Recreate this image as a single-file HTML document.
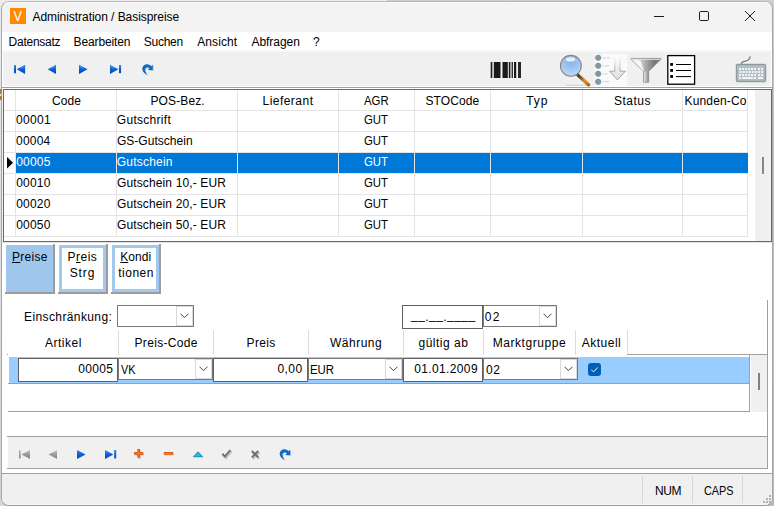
<!DOCTYPE html><html lang="de"><head><meta charset="utf-8"><title>Administration / Basispreise</title><style>
*{box-sizing:border-box;margin:0;padding:0}
html,body{width:774px;height:506px;overflow:hidden}
body{background:linear-gradient(90deg,rgba(0,0,0,0) 0,rgba(0,0,0,0) 50%,rgba(0,0,0,.13) 50%,rgba(0,0,0,.13) 100%),linear-gradient(#ededed,#e0e0e0 30%,#d4d4d4);font-family:"Liberation Sans",sans-serif;font-size:12px;color:#000;position:relative}
.a{position:absolute}
.t{position:absolute;white-space:pre;line-height:14px;height:14px}
.us{position:relative;top:-2.3px}
.c{text-align:center}
.r{text-align:right}
#win{left:1px;top:1px;width:772px;height:505px;border:1px solid #a6a6a6;border-top-color:#b8b8b8;border-bottom-color:#9a9a9a;border-radius:8px;background:#f0f0f0;overflow:hidden}
.hl{position:absolute;height:1px}
.vl{position:absolute;width:1px}
u{text-decoration:underline;text-decoration-thickness:1px}
</style></head><body>
<div class="a" id="win"></div>
<div class="a" id="lay" style="left:0;top:0;width:774px;height:506px;clip-path:inset(2px 2px 1px 2px round 7px)">
<div class="a" style="left:2px;top:2px;width:770px;height:30px;background:#f3f3f3"></div>
<div class="a" style="left:2px;top:2px;width:770px;height:1px;background:#f8f8f8"></div>
<div class="a" style="left:10px;top:8px;width:16px;height:16px;background:#ff8a00;color:#fff;font-size:14.5px;line-height:16px;text-align:center"><span style="display:inline-block;transform:scaleX(.88)">V</span></div>
<div class="t" style="left:32.47px;top:10px;letter-spacing:-0.05px;">Administration / Basispreise</div>
<svg class="a" style="left:640px;top:2px" width="132" height="30" viewBox="640 2 132 30" fill="none" stroke="#1a1a1a" stroke-width="1"><path d="M654 16.5H664"/><rect x="699.5" y="11.5" width="9" height="9" rx="1.2"/><path d="M745 11L755 21M755 11L745 21"/></svg>
<div class="a" style="left:2px;top:32px;width:770px;height:18px;background:#fff"></div>
<div class="a" style="left:2px;top:50px;width:770px;height:2px;background:#f8f8f8"></div>
<div class="t" style="left:8.6px;top:35px;letter-spacing:-0.25px;">Datensatz</div>
<div class="t" style="left:73.6px;top:35px;letter-spacing:-0.14px;">Bearbeiten</div>
<div class="t" style="left:143.85px;top:35px;letter-spacing:-0.28px;">Suchen</div>
<div class="t" style="left:197.22px;top:35px;letter-spacing:0.09px;">Ansicht</div>
<div class="t" style="left:251.43px;top:35px;letter-spacing:-0.03px;">Abfragen</div>
<div class="t" style="left:313.12px;top:35px;">?</div>
<div class="a" style="left:3px;top:52px;width:768px;height:34px;background:#f0f0f0"></div>
<div class="a" style="left:771px;top:52px;width:1px;height:34px;background:#fff"></div>
<div class="a" style="left:2px;top:52px;width:1px;height:34px;background:#fff"></div>
<div class="a" style="left:2px;top:86px;width:770px;height:1px;background:#fff"></div>
<div class="a" style="left:2px;top:87px;width:770px;height:1px;background:#a0a0a0"></div>
<div class="a" style="left:2px;top:88px;width:770px;height:1px;background:#fff"></div>
<svg class="a" style="left:0;top:52px" width="774" height="36" viewBox="0 52 774 36"><defs><linearGradient id="gb" x1="0" y1="0" x2="0" y2="1"><stop offset="0" stop-color="#3a8cf2"/><stop offset="0.5" stop-color="#0a5fd8"/><stop offset="1" stop-color="#0048b4"/></linearGradient><linearGradient id="gg" x1="0" y1="0" x2="0" y2="1"><stop offset="0" stop-color="#c4c4c4"/><stop offset="0.5" stop-color="#9a9a9a"/><stop offset="1" stop-color="#868686"/></linearGradient><radialGradient id="lens" cx="0.5" cy="0.25" r="0.9"><stop offset="0" stop-color="#7fb0ea"/><stop offset="0.55" stop-color="#a6caf3"/><stop offset="1" stop-color="#d2e5fa"/></radialGradient><linearGradient id="fun" x1="0" y1="0" x2="1" y2="0"><stop offset="0" stop-color="#e8e8e8"/><stop offset="0.3" stop-color="#d0d0d0"/><stop offset="0.5" stop-color="#a8a8a8"/><stop offset="0.8" stop-color="#757575"/><stop offset="1" stop-color="#8a8a8a"/></linearGradient><linearGradient id="stem" x1="0" y1="0" x2="1" y2="0"><stop offset="0" stop-color="#e2e2e2"/><stop offset="0.5" stop-color="#bdbdbd"/><stop offset="1" stop-color="#8e8e8e"/></linearGradient><linearGradient id="arrs" gradientUnits="userSpaceOnUse" x1="0" y1="56" x2="0" y2="80"><stop offset="0" stop-color="#b0b0b0" stop-opacity="0"/><stop offset="0.35" stop-color="#a8a8a8" stop-opacity="0.55"/><stop offset="0.65" stop-color="#9a9a9a"/><stop offset="1" stop-color="#a0a0a0"/></linearGradient><linearGradient id="arr" x1="0" y1="0" x2="0" y2="1"><stop offset="0" stop-color="#ffffff"/><stop offset="1" stop-color="#dcdcd6"/></linearGradient><linearGradient id="hand" x1="0" y1="0" x2="1" y2="1"><stop offset="0" stop-color="#3a3a3a"/><stop offset="0.25" stop-color="#8a4a10"/><stop offset="0.6" stop-color="#d98a2b"/><stop offset="1" stop-color="#b5651d"/></linearGradient></defs><g fill="url(#gb)"><rect x="14" y="65" width="2" height="8.2"/><path d="M25.1 64.7V73.9L16.7 69.3Z"/><path d="M56 64.7V73.9L47.7 69.3Z"/><path d="M79 64.7V73.9L87.6 69.3Z"/><path d="M110 64.7V73.9L118.4 69.3Z"/><rect x="119" y="65" width="2.1" height="8.2"/></g><g stroke="#5aa8f8" stroke-width="0.9" opacity="0.7"><path d="M20.5 68.2L24 66.6"/><path d="M51.5 68.2L55 66.6"/><path d="M80 66.6L83.5 68.2"/><path d="M111 66.6L114.5 68.2"/></g><g transform="translate(0 0)"><path d="M147.3 75C143.5 73.3 142 70.6 142.3 68.3C142.7 65.6 145 64.1 147.3 64.2C149 64.3 150.4 65.2 151.2 66.3L152.8 64.7V70H147.9L149.4 68.4C148.8 67.6 148 67.2 147.2 67.2C146 67.2 145 68.2 145 69.6C145 71.5 145.9 73.3 147.3 75Z" fill="#c4c4c4" transform="translate(0.9 0.9)"/><path d="M147.3 75C143.5 73.3 142 70.6 142.3 68.3C142.7 65.6 145 64.1 147.3 64.2C149 64.3 150.4 65.2 151.2 66.3L152.8 64.7V70H147.9L149.4 68.4C148.8 67.6 148 67.2 147.2 67.2C146 67.2 145 68.2 145 69.6C145 71.5 145.9 73.3 147.3 75Z" fill="#0b6bcb"/></g><g fill="#1b191c"><rect x="490.7" y="62" width="1.6" height="16"/><rect x="493.8" y="62" width="6.7" height="16"/><rect x="502" y="62" width="0.9" height="16" fill="#777"/><rect x="503" y="62" width="4.8" height="16"/><rect x="508.8" y="62" width="1.2" height="16"/><rect x="510.4" y="62" width="1" height="16" fill="#666"/><rect x="511.8" y="62" width="1.2" height="16" fill="#333"/><rect x="514" y="62" width="2.2" height="16"/><rect x="518" y="62" width="3" height="16" fill="#2a282b"/></g><path d="M566 85.3H589" stroke="#cfcfcf" stroke-width="1"/><path d="M578.2 75.2L588.6 84.8" stroke="url(#hand)" stroke-width="3.6" stroke-linecap="round"/><path d="M579.3 74.3L588.9 83.2" stroke="#f0b45a" stroke-width="0.9" stroke-linecap="round"/><circle cx="570.9" cy="65.8" r="10.4" fill="url(#lens)" stroke="#858585" stroke-width="1.1"/><ellipse cx="570.6" cy="59.4" rx="4.6" ry="2.1" fill="#fff" opacity="0.8"/><rect x="595" y="54" width="32" height="32" fill="#fafafa"/><g fill="#8593b3" stroke="#7c9a90" stroke-width="0.8"><circle cx="598.2" cy="57.8" r="2.7"/><circle cx="598.2" cy="65.8" r="2.7"/><circle cx="598.2" cy="73.8" r="2.7"/><circle cx="598.2" cy="81.7" r="2.7"/></g><g stroke="#d4d4d4" stroke-width="1.2"><path d="M602.5 57.8H606M607 57.8H609.5"/><path d="M602.5 65.8H604M605 65.8H609"/><path d="M602.5 73.8H604M605 73.8H607.5"/><path d="M602.5 81.7H604M605 81.7H609"/></g><path d="M614.8 56.5V71.2H609.6L617.4 80L625.4 71.2H620V56.5Z" fill="url(#arr)" stroke="url(#arrs)" stroke-width="0.9"/><path d="M631.3 58.4H660.8V59.6L648.7 71.3V82.2H643.5V71.3L631.3 59.6Z" fill="url(#fun)" stroke="#8c8c8c" stroke-width="0.8" stroke-linejoin="round"/><rect x="643.9" y="71.6" width="4.4" height="10.2" fill="url(#stem)"/><path d="M632.6 60.2H640.4L643.9 70.6L643.4 71Z" fill="#f6f6f6"/><path d="M632 59.4H660" stroke="#dedede" stroke-width="1"/><rect x="667.8" y="55.6" width="26.8" height="28.6" fill="#fff" stroke="#000" stroke-width="1.3"/><g fill="#000"><rect x="670.2" y="63" width="2.8" height="2.8"/><rect x="670.2" y="69" width="2.8" height="2.8"/><rect x="670.2" y="75.1" width="2.8" height="2.8"/><rect x="676" y="64" width="15" height="1"/><rect x="676" y="70" width="15" height="1"/><rect x="676" y="76.1" width="15" height="1"/></g><path d="M741.2 64.3C741.4 58.8 749.8 63.6 750.2 56.3" fill="none" stroke="#6f8088" stroke-width="1.25"/><rect x="736.3" y="64.3" width="29.4" height="17.4" rx="1" fill="#a9b5ba" stroke="#7f9097" stroke-width="1"/><rect x="737.6" y="65.8" width="26.8" height="14.4" fill="#b4bfc3"/><g fill="#f2f4f4">
<rect x="739" y="68" width="2" height="2"/>
<rect x="742" y="68" width="2" height="2"/>
<rect x="745" y="68" width="2" height="2"/>
<rect x="748" y="68" width="2" height="2"/>
<rect x="751" y="68" width="2" height="2"/>
<rect x="754" y="68" width="2" height="2"/>
<rect x="758" y="68" width="2" height="2"/>
<rect x="761" y="68" width="2" height="2"/>
<rect x="739.8" y="71" width="2" height="2"/>
<rect x="742.8" y="71" width="2" height="2"/>
<rect x="745.8" y="71" width="2" height="2"/>
<rect x="748.8" y="71" width="2" height="2"/>
<rect x="751.8" y="71" width="2" height="2"/>
<rect x="754.8" y="71" width="2" height="2"/>
<rect x="758" y="71" width="2" height="2"/>
<rect x="761" y="71" width="2" height="2"/>
<rect x="739" y="74" width="2" height="2"/>
<rect x="742" y="74" width="2" height="2"/>
<rect x="745" y="74" width="2" height="2"/>
<rect x="748" y="74" width="2" height="2"/>
<rect x="751" y="74" width="2" height="2"/>
<rect x="754" y="74" width="2" height="2"/>
<rect x="758" y="74" width="2" height="2"/>
<rect x="761" y="74" width="2" height="2"/>
<rect x="739" y="77" width="2" height="2"/>
<rect x="742" y="77" width="11" height="2"/>
<rect x="754" y="77" width="2" height="2"/>
<rect x="758" y="77" width="5" height="2"/>
</g></svg>
<div class="a" style="left:3px;top:89px;width:769px;height:153px;background:#fff;border:1px solid #696969"></div>
<div class="a" style="left:2px;top:242px;width:770px;height:1px;background:#e3e3e3"></div>
<div class="a" style="left:4px;top:110px;width:744px;height:1px;background:#e4e4e4"></div>
<div class="a" style="left:4px;top:131px;width:744px;height:1px;background:#e4e4e4"></div>
<div class="a" style="left:4px;top:152px;width:744px;height:1px;background:#e4e4e4"></div>
<div class="a" style="left:4px;top:173px;width:744px;height:1px;background:#e4e4e4"></div>
<div class="a" style="left:4px;top:194px;width:744px;height:1px;background:#e4e4e4"></div>
<div class="a" style="left:4px;top:215px;width:744px;height:1px;background:#e4e4e4"></div>
<div class="a" style="left:4px;top:236px;width:744px;height:1px;background:#e4e4e4"></div>
<div class="a" style="left:15px;top:90px;width:1px;height:147px;background:#e4e4e4"></div>
<div class="a" style="left:116px;top:90px;width:1px;height:147px;background:#e4e4e4"></div>
<div class="a" style="left:237px;top:90px;width:1px;height:147px;background:#e4e4e4"></div>
<div class="a" style="left:338px;top:90px;width:1px;height:147px;background:#e4e4e4"></div>
<div class="a" style="left:414px;top:90px;width:1px;height:147px;background:#e4e4e4"></div>
<div class="a" style="left:490px;top:90px;width:1px;height:147px;background:#e4e4e4"></div>
<div class="a" style="left:582px;top:90px;width:1px;height:147px;background:#e4e4e4"></div>
<div class="a" style="left:682px;top:90px;width:1px;height:147px;background:#e4e4e4"></div>
<div class="a" style="left:747px;top:90px;width:1px;height:147px;background:#e4e4e4"></div>
<div class="a" style="left:16px;top:153px;width:732px;height:20px;background:#0078d7"></div>
<div class="a" style="left:116px;top:153px;width:1px;height:20px;background:#e4e4e4"></div>
<div class="a" style="left:237px;top:153px;width:1px;height:20px;background:#e4e4e4"></div>
<div class="a" style="left:338px;top:153px;width:1px;height:20px;background:#e4e4e4"></div>
<div class="a" style="left:414px;top:153px;width:1px;height:20px;background:#e4e4e4"></div>
<div class="a" style="left:490px;top:153px;width:1px;height:20px;background:#e4e4e4"></div>
<div class="a" style="left:582px;top:153px;width:1px;height:20px;background:#e4e4e4"></div>
<div class="a" style="left:682px;top:153px;width:1px;height:20px;background:#e4e4e4"></div>
<svg class="a" style="left:4px;top:153px" width="11" height="20" viewBox="4 153 11 20"><rect x="8" y="157" width="6" height="12" fill="#f4f4f4"/><path d="M7 157V168.6L13 162.8Z" fill="#000"/></svg>
<div class="a" style="left:755px;top:90px;width:16px;height:151px;background:#f0f0f0"></div>
<div class="a" style="left:762px;top:157px;width:2px;height:17px;background:#868686"></div>
<div class="t" style="left:52.0px;top:94px;letter-spacing:0.08px;">Code</div>
<div class="t" style="left:150.5px;top:94px;letter-spacing:0.11px;">POS-Bez.</div>
<div class="t" style="left:262.5px;top:94px;letter-spacing:0.47px;">Lieferant</div>
<div class="t" style="left:364.0px;top:94px;transform:scaleX(0.9451);transform-origin:0 0;">AGR</div>
<div class="t" style="left:425.5px;top:94px;letter-spacing:0.08px;">STOCode</div>
<div class="t" style="left:526.25px;top:94px;letter-spacing:0.88px;">Typ</div>
<div class="t" style="left:614.0px;top:94px;letter-spacing:0.5px;">Status</div>
<div class="t" style="left:684.5px;top:94px;letter-spacing:0.16px;">Kunden-Co</div>
<div class="t" style="left:16.05px;top:113px;letter-spacing:0.29px;">00001</div>
<div class="t" style="left:116.83px;top:113px;letter-spacing:0.29px;">Gutschrift</div>
<div class="t" style="left:363.93px;top:113px;transform:scaleX(0.9469);transform-origin:0 0;">GUT</div>
<div class="t" style="left:16.05px;top:134px;letter-spacing:0.22px;">00004</div>
<div class="t" style="left:116.95px;top:134px;letter-spacing:0.03px;">GS-Gutschein</div>
<div class="t" style="left:363.93px;top:134px;transform:scaleX(0.9469);transform-origin:0 0;">GUT</div>
<div class="t" style="left:16.18px;top:155px;letter-spacing:0.22px;color:#fff;">00005</div>
<div class="t" style="left:116.83px;top:155px;letter-spacing:0.2px;color:#fff;">Gutschein</div>
<div class="t" style="left:363.93px;top:155px;color:#fff;transform:scaleX(0.9469);transform-origin:0 0;">GUT</div>
<div class="t" style="left:16.18px;top:176px;letter-spacing:0.22px;">00010</div>
<div class="t" style="left:116.98px;top:176px;letter-spacing:0.13px;">Gutschein 10,- EUR</div>
<div class="t" style="left:363.93px;top:176px;transform:scaleX(0.9469);transform-origin:0 0;">GUT</div>
<div class="t" style="left:16.18px;top:197px;letter-spacing:0.22px;">00020</div>
<div class="t" style="left:116.98px;top:197px;letter-spacing:0.13px;">Gutschein 20,- EUR</div>
<div class="t" style="left:363.93px;top:197px;transform:scaleX(0.9469);transform-origin:0 0;">GUT</div>
<div class="t" style="left:16.18px;top:218px;letter-spacing:0.22px;">00050</div>
<div class="t" style="left:116.98px;top:218px;letter-spacing:0.13px;">Gutschein 50,- EUR</div>
<div class="t" style="left:363.93px;top:218px;transform:scaleX(0.9469);transform-origin:0 0;">GUT</div>
<div class="a" style="left:2px;top:243px;width:770px;height:230px;background:#fff"></div>
<div class="a" style="left:5px;top:244px;width:50px;height:50px;background:#9c9c9c"></div>
<div class="a" style="left:5px;top:244px;width:48px;height:48px;background:#fff"></div>
<div class="a" style="left:6px;top:245px;width:47px;height:47px;background:#9fc7ee"></div>
<div class="a" style="left:58px;top:244px;width:50px;height:50px;background:#9c9c9c"></div>
<div class="a" style="left:58px;top:244px;width:48px;height:48px;background:#fff"></div>
<div class="a" style="left:59px;top:245px;width:47px;height:47px;background:#fff;border:3px solid #a3c8ee"></div>
<div class="a" style="left:111px;top:244px;width:50px;height:50px;background:#9c9c9c"></div>
<div class="a" style="left:111px;top:244px;width:48px;height:48px;background:#fff"></div>
<div class="a" style="left:112px;top:245px;width:47px;height:47px;background:#fff;border:3px solid #a3c8ee"></div>
<div class="t" style="left:12.02px;top:250px;letter-spacing:0.26px;"><u>P</u>reise</div>
<div class="t" style="left:67.5px;top:250px;letter-spacing:0.5px;">P<u>r</u>eis</div>
<div class="t" style="left:69.7px;top:266px;letter-spacing:0.92px;">Strg</div>
<div class="t" style="left:120.22px;top:250px;letter-spacing:0.07px;"><u>K</u>ondi</div>
<div class="t" style="left:118.3px;top:266px;letter-spacing:0.47px;">tionen</div>
<div class="t" style="left:24.12px;top:310px;letter-spacing:0.38px;">Einschränkung:</div>
<div class="a" style="left:117px;top:305px;width:77px;height:22px;background:#fff;border:1px solid #7a7a7a"></div>
<div class="a" style="left:176px;top:306px;width:17px;height:20px;background:#fff;border:1px solid #d9d9d9"></div>
<svg class="a" style="left:180px;top:313.3px" width="9" height="6" viewBox="0 0 9 6"><path d="M0.5 0.7L4.5 4.7L8.5 0.7" fill="none" stroke="#444" stroke-width="1"/></svg>
<div class="a" style="left:402px;top:305px;width:81px;height:24px;background:#fff;border:1px solid #606060"></div>
<div class="t" style="left:411.12px;top:310px;letter-spacing:0.43px;"><span class="us">__</span>.<span class="us">__</span>.<span class="us">____</span></div>
<div class="a" style="left:483px;top:305px;width:74px;height:22px;background:#fff;border:1px solid #7a7a7a"></div>
<div class="a" style="left:539px;top:306px;width:17px;height:20px;background:#fff;border:1px solid #d9d9d9"></div>
<svg class="a" style="left:543px;top:313.3px" width="9" height="6" viewBox="0 0 9 6"><path d="M0.5 0.7L4.5 4.7L8.5 0.7" fill="none" stroke="#444" stroke-width="1"/></svg>
<div class="t" style="left:484.85px;top:310px;letter-spacing:1.35px;">02</div>
<div class="a" style="left:118px;top:330px;width:1px;height:25px;background:#dcdcdc"></div>
<div class="a" style="left:213px;top:330px;width:1px;height:25px;background:#dcdcdc"></div>
<div class="a" style="left:308px;top:330px;width:1px;height:25px;background:#dcdcdc"></div>
<div class="a" style="left:403px;top:330px;width:1px;height:25px;background:#dcdcdc"></div>
<div class="a" style="left:483px;top:330px;width:1px;height:25px;background:#dcdcdc"></div>
<div class="a" style="left:575px;top:330px;width:1px;height:25px;background:#dcdcdc"></div>
<div class="a" style="left:627px;top:330px;width:1px;height:25px;background:#dcdcdc"></div>
<div class="a" style="left:627px;top:354px;width:141px;height:1px;background:#a0a0a0"></div>
<div class="a" style="left:767px;top:300px;width:1px;height:169px;background:#a0a0a0"></div>
<div class="t" style="left:45.0px;top:336px;letter-spacing:0.5px;">Artikel</div>
<div class="t" style="left:134.5px;top:336px;letter-spacing:0.33px;">Preis-Code</div>
<div class="t" style="left:246.5px;top:336px;letter-spacing:0.38px;">Preis</div>
<div class="t" style="left:330.0px;top:336px;letter-spacing:0.5px;">Währung</div>
<div class="t" style="left:418.5px;top:336px;letter-spacing:0.5px;">gültig ab</div>
<div class="t" style="left:492.75px;top:336px;letter-spacing:0.55px;">Marktgruppe</div>
<div class="t" style="left:581.83px;top:336px;letter-spacing:0.48px;">Aktuell</div>
<div class="a" style="left:7px;top:354px;width:1px;height:1px;background:#999"></div>
<div class="a" style="left:9px;top:357px;width:740px;height:26px;background:#99ccff"></div>
<div class="a" style="left:8px;top:383px;width:742px;height:1px;background:#a0a0a0"></div>
<div class="a" style="left:8px;top:411px;width:742px;height:1px;background:#a0a0a0"></div>
<div class="a" style="left:749px;top:355px;width:1px;height:57px;background:#a0a0a0"></div>
<div class="a" style="left:751px;top:355px;width:16px;height:57px;background:#f0f0f0"></div>
<div class="a" style="left:758px;top:373px;width:2px;height:17px;background:#808080"></div>
<div class="a" style="left:18px;top:358px;width:100px;height:24px;background:#fff;border:1px solid #606060"></div>
<div class="t" style="left:78.35px;top:362px;letter-spacing:0.28px;">00005</div>
<div class="a" style="left:118px;top:358px;width:95px;height:22px;background:#fff;border:1px solid #7a7a7a"></div>
<div class="a" style="left:195px;top:359px;width:17px;height:20px;background:#fff;border:1px solid #d9d9d9"></div>
<svg class="a" style="left:199px;top:366.3px" width="9" height="6" viewBox="0 0 9 6"><path d="M0.5 0.7L4.5 4.7L8.5 0.7" fill="none" stroke="#444" stroke-width="1"/></svg>
<div class="t" style="left:121.25px;top:363px;transform:scaleX(0.9048);transform-origin:0 0;">VK</div>
<div class="a" style="left:213px;top:358px;width:95px;height:24px;background:#fff;border:1px solid #606060"></div>
<div class="t" style="left:277.5px;top:362px;letter-spacing:0.42px;">0,00</div>
<div class="a" style="left:308px;top:358px;width:95px;height:22px;background:#fff;border:1px solid #7a7a7a"></div>
<div class="a" style="left:385px;top:359px;width:17px;height:20px;background:#fff;border:1px solid #d9d9d9"></div>
<svg class="a" style="left:389px;top:366.3px" width="9" height="6" viewBox="0 0 9 6"><path d="M0.5 0.7L4.5 4.7L8.5 0.7" fill="none" stroke="#444" stroke-width="1"/></svg>
<div class="t" style="left:310.3px;top:363px;transform:scaleX(0.9474);transform-origin:0 0;">EUR</div>
<div class="a" style="left:403px;top:358px;width:80px;height:24px;background:#fff;border:1px solid #606060"></div>
<div class="t" style="left:414.27px;top:362px;letter-spacing:0.36px;">01.01.2009</div>
<div class="a" style="left:483px;top:358px;width:95px;height:22px;background:#fff;border:1px solid #7a7a7a"></div>
<div class="a" style="left:560px;top:359px;width:17px;height:20px;background:#fff;border:1px solid #d9d9d9"></div>
<svg class="a" style="left:564px;top:366.3px" width="9" height="6" viewBox="0 0 9 6"><path d="M0.5 0.7L4.5 4.7L8.5 0.7" fill="none" stroke="#444" stroke-width="1"/></svg>
<div class="t" style="left:485.9px;top:363px;letter-spacing:0.75px;">02</div>
<svg class="a" style="left:588px;top:363px" width="13" height="13" viewBox="0 0 13 13"><rect x="0" y="0" width="13" height="13" rx="3" fill="#005fb8"/><path d="M3.3 6.7L5.5 8.9L9.8 4.4" fill="none" stroke="#fff" stroke-width="0.95"/></svg>
<div class="a" style="left:7px;top:436px;width:761px;height:1px;background:#a0a0a0"></div>
<div class="a" style="left:8px;top:437px;width:759px;height:31px;background:#f0f0f0"></div>
<div class="a" style="left:7px;top:468px;width:761px;height:1px;background:#a0a0a0"></div>
<svg class="a" style="left:8px;top:437px" width="300" height="31" viewBox="8 437 300 31"><g fill="url(#gg)"><rect x="19" y="450" width="1.6" height="8.4"/><path d="M30 450V459L21.4 454.5Z"/><path d="M57 450V459L48.5 454.5Z"/></g><g fill="url(#gb)"><path d="M77 450V459L85.6 454.5Z"/><path d="M105 450V459L113.4 454.5Z"/><rect x="114.2" y="450" width="2" height="8.4"/></g><path d="M137.3 449H140V452H143.2V454.7H140V457.8H137.3V454.7H134.1V452H137.3Z" fill="#c9c9c9" transform="translate(0.9 0.9)"/><path d="M137.3 449H140V452H143.2V454.7H140V457.8H137.3V454.7H134.1V452H137.3Z" fill="#e2500a"/><path d="M138.6 449.8V457M135 453.3H142.3" stroke="#ff8c38" stroke-width="0.8"/><rect x="163.8" y="452" width="9.3" height="2.7" fill="#c9c9c9" transform="translate(0.8 0.8)"/><rect x="163.8" y="452" width="9.3" height="2.7" fill="#e2500a"/><path d="M164.5 453.3H172.5" stroke="#ff8c38" stroke-width="0.8"/><path d="M198 451.3L203.3 456.9H192.7Z" fill="#c9c9c9" transform="translate(0.6 0.8)"/><path d="M198 451.3L203.3 456.9H192.7Z" fill="#1a9cc0"/><path d="M198 452.6L201 455.9H195Z" fill="#35b4d4"/><path d="M222.3 454.6L225 457.3L231 450.4" fill="none" stroke="#bdbdbd" stroke-width="2" transform="translate(0.8 0.8)"/><path d="M222.3 453.8L225 456.4L230.3 450" fill="none" stroke="#6e6e6e" stroke-width="1.9"/><path d="M252 451.5L258.5 458M258.5 451.5L252 458" stroke="#bdbdbd" stroke-width="2" transform="translate(0.8 0.8)"/><path d="M251.8 451L258.2 457.4M258.2 451L251.8 457.4" stroke="#6e6e6e" stroke-width="1.9"/><g transform="translate(137.4 385)"><path d="M147.3 75C143.5 73.3 142 70.6 142.3 68.3C142.7 65.6 145 64.1 147.3 64.2C149 64.3 150.4 65.2 151.2 66.3L152.8 64.7V70H147.9L149.4 68.4C148.8 67.6 148 67.2 147.2 67.2C146 67.2 145 68.2 145 69.6C145 71.5 145.9 73.3 147.3 75Z" fill="#c4c4c4" transform="translate(0.9 0.9)"/><path d="M147.3 75C143.5 73.3 142 70.6 142.3 68.3C142.7 65.6 145 64.1 147.3 64.2C149 64.3 150.4 65.2 151.2 66.3L152.8 64.7V70H147.9L149.4 68.4C148.8 67.6 148 67.2 147.2 67.2C146 67.2 145 68.2 145 69.6C145 71.5 145.9 73.3 147.3 75Z" fill="#0b6bcb"/></g></svg>
<div class="a" style="left:2px;top:473px;width:770px;height:1px;background:#a0a0a0"></div>
<div class="a" style="left:2px;top:474px;width:770px;height:30px;background:#f0f0f0"></div>
<div class="a" style="left:2px;top:504px;width:770px;height:1px;background:#f6f6f6"></div>
<div class="a" style="left:642px;top:476px;width:1px;height:27px;background:#d7d7d7"></div>
<div class="a" style="left:692px;top:476px;width:1px;height:27px;background:#d7d7d7"></div>
<div class="a" style="left:742px;top:476px;width:1px;height:27px;background:#d7d7d7"></div>
<div class="t" style="left:654.92px;top:484px;letter-spacing:-0.32px;">NUM</div>
<div class="t" style="left:703.55px;top:484px;transform:scaleX(0.9039);transform-origin:0 0;">CAPS</div>
<div class="a" style="left:769px;top:495px;width:2px;height:2px;background:#b4b4b4"></div>
<div class="a" style="left:766px;top:498px;width:2px;height:2px;background:#b4b4b4"></div>
<div class="a" style="left:769px;top:498px;width:2px;height:2px;background:#b4b4b4"></div>
<div class="a" style="left:763px;top:501px;width:2px;height:2px;background:#b4b4b4"></div>
<div class="a" style="left:766px;top:501px;width:2px;height:2px;background:#b4b4b4"></div>
<div class="a" style="left:769px;top:501px;width:2px;height:2px;background:#b4b4b4"></div>
</div>
<div class="a" style="left:0px;top:89px;width:1px;height:5px;background:#a97c2c"></div>
<div class="a" style="left:1px;top:89px;width:1px;height:4px;background:#a97c2c;opacity:.55"></div>
<div class="a" style="left:0px;top:96px;width:1px;height:4px;background:#a97c2c"></div>
<div class="a" style="left:1px;top:96px;width:1px;height:3px;background:#a97c2c;opacity:.7"></div>
</body></html>
